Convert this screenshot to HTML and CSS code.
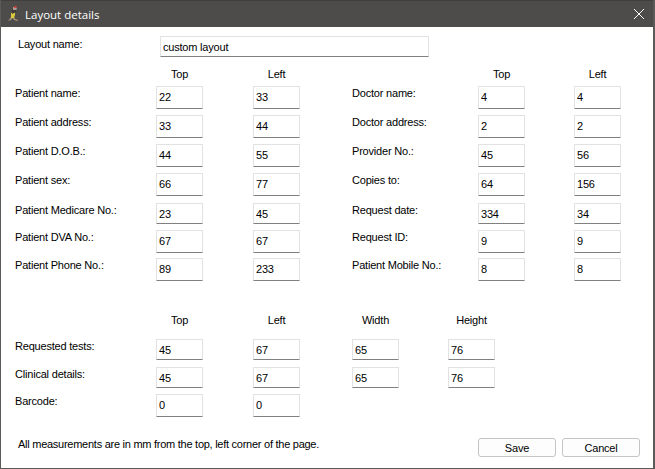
FILE: index.html
```html
<!DOCTYPE html>
<html lang="en">
<head>
  <meta charset="UTF-8" />
  <title>Layout details</title>
  <link rel="stylesheet" href="styles.css">
</head>
<body>

  <div class="window">

    <div class="titlebar">
      <svg class="app-icon" width="12" height="16" viewBox="0 0 12 16">
        <path d="M1 15l3-4 2 1-2 2z" fill="#9c8f78"/>
        <path d="M7 11l1 2 3 1 0 1-4-1-1-2z" fill="#b09a70"/>
        <path d="M4 7l4-1 0 3-1 3-3 0z" fill="#d9c83c"/>
        <path d="M5 3l4 0 0 3-4 2z" fill="#3f3b38"/>
        <path d="M6 1h3l1 2-1 1-3 0z" fill="#a89c94"/>
        <path d="M7 0h2l1 1-1 1-2 0z" fill="#c8433c"/>
      </svg>
      <span class="title">Layout details</span>
      <svg class="close" width="10" height="10" viewBox="0 0 10 10">
        <path d="M0 0L10 10M10 0L0 10" stroke="#ffffff" stroke-width="1" fill="none"/>
      </svg>
    </div>

    <div class="content">

      <div class="name-row">
        <label class="name-label">Layout name:</label>
        <input class="field field-short field-name" value="custom layout">
      </div>

      <!-- Patient and doctor positions -->
      <div class="grid grid-top">
        <span></span>
        <span class="head">Top</span>
        <span class="head">Left</span>
        <span></span>
        <span class="head">Top</span>
        <span class="head">Left</span>

        <label>Patient name:</label>
        <input class="field" value="22">
        <input class="field" value="33">
        <label>Doctor name:</label>
        <input class="field" value="4">
        <input class="field" value="4">

        <label>Patient address:</label>
        <input class="field" value="33">
        <input class="field" value="44">
        <label>Doctor address:</label>
        <input class="field" value="2">
        <input class="field" value="2">

        <label>Patient D.O.B.:</label>
        <input class="field" value="44">
        <input class="field" value="55">
        <label>Provider No.:</label>
        <input class="field" value="45">
        <input class="field" value="56">

        <label>Patient sex:</label>
        <input class="field" value="66">
        <input class="field" value="77">
        <label>Copies to:</label>
        <input class="field" value="64">
        <input class="field" value="156">

        <label>Patient Medicare No.:</label>
        <input class="field field-short" value="23">
        <input class="field field-short" value="45">
        <label>Request date:</label>
        <input class="field field-short" value="334">
        <input class="field field-short" value="34">

        <label>Patient DVA No.:</label>
        <input class="field" value="67">
        <input class="field" value="67">
        <label>Request ID:</label>
        <input class="field" value="9">
        <input class="field" value="9">

        <label>Patient Phone No.:</label>
        <input class="field" value="89">
        <input class="field" value="233">
        <label>Patient Mobile No.:</label>
        <input class="field" value="8">
        <input class="field" value="8">
      </div>

      <!-- Tests and barcode -->
      <div class="grid grid-bottom">
        <span></span>
        <span class="head">Top</span>
        <span class="head">Left</span>
        <span class="head">Width</span>
        <span class="head">Height</span>

        <label>Requested tests:</label>
        <input class="field field-short" value="45">
        <input class="field field-short" value="67">
        <input class="field field-short" value="65">
        <input class="field field-short" value="76">

        <label>Clinical details:</label>
        <input class="field field-short" value="45">
        <input class="field field-short" value="67">
        <input class="field field-short" value="65">
        <input class="field field-short" value="76">

        <label>Barcode:</label>
        <input class="field" value="0">
        <input class="field" value="0">
      </div>

      <div class="footer">
        <span class="note">All measurements are in mm from the top, left corner of the page.</span>
        <button class="btn">Save</button>
        <button class="btn">Cancel</button>
      </div>

    </div>
  </div>

</body>
</html>
```

FILE: styles.css
```css
body {
  margin: 0;
  font-family: "Liberation Sans", Arial, sans-serif;
  font-size: 11px;
  letter-spacing: -0.2px;
  color: #000000;
  background: #ffffff;
}

.window {
  width: 655px;
  height: 469px;
  box-sizing: border-box;
  border: 1px solid #5a5a58;
  border-top: none;
  border-right-width: 2px;
  background: #ffffff;
  overflow: hidden;
}

.titlebar {
  height: 27px;
  margin: 0 -2px 0 -1px;
  padding: 0 11px 0 7px;
  display: flex;
  align-items: center;
  background: #4d4c4a;
  border-top: 1px solid #403f3d;
  box-sizing: border-box;
}

.app-icon {
  margin-right: 6px;
}

.title {
  flex: 1;
  color: #ffffff;
  font-family: "Open Sans", sans-serif;
  font-size: 11.5px;
  letter-spacing: 0;
}

.content {
  padding: 9px 0 0 14px;
}

.name-row {
  display: flex;
  align-items: flex-start;
}

.name-label {
  width: 142px;
  padding-left: 3px;
  padding-top: 1px;
}

label {
  line-height: 14px;
}

.field {
  display: block;
  width: 47px;
  height: 23px;
  box-sizing: border-box;
  margin: 0;
  padding: 1px 2px 2px 2px;
  border: 1px solid #e2e2e2;
  border-bottom-color: #808080;
  border-radius: 1px;
  outline: none;
  background: #ffffff;
  color: #000000;
  font: inherit;
  font-size: 11px;
  letter-spacing: -0.2px;
}

.field-short {
  height: 21px;
  padding-bottom: 0;
}

.field-name {
  width: 269px;
}

.grid {
  display: grid;
  align-items: start;
}

.grid-top {
  grid-template-columns: 141px 97px 99px 126px 96px 47px;
  grid-template-rows: 19px 29px 29px 29px 30px 27px 28px 23px;
  margin-top: 10px;
}

.grid-bottom {
  grid-template-columns: 141px 97px 99px 96px 47px;
  grid-template-rows: 26px 28px 27px 23px;
  margin-top: 32px;
}

.head {
  width: 47px;
  text-align: center;
  line-height: 14px;
}

.footer {
  display: flex;
  align-items: flex-start;
  margin-top: 21px;
  padding-left: 3px;
}

.note {
  width: 460px;
  margin-top: -1px;
  line-height: 14px;
  letter-spacing: -0.26px;
}

.btn {
  width: 78px;
  height: 19px;
  margin: 0 6px 0 0;
  padding: 0;
  border: 1px solid #c4c4c4;
  border-radius: 3px;
  background: #fdfdfd;
  color: #000000;
  font: inherit;
  font-size: 11px;
  letter-spacing: -0.2px;
}
```
